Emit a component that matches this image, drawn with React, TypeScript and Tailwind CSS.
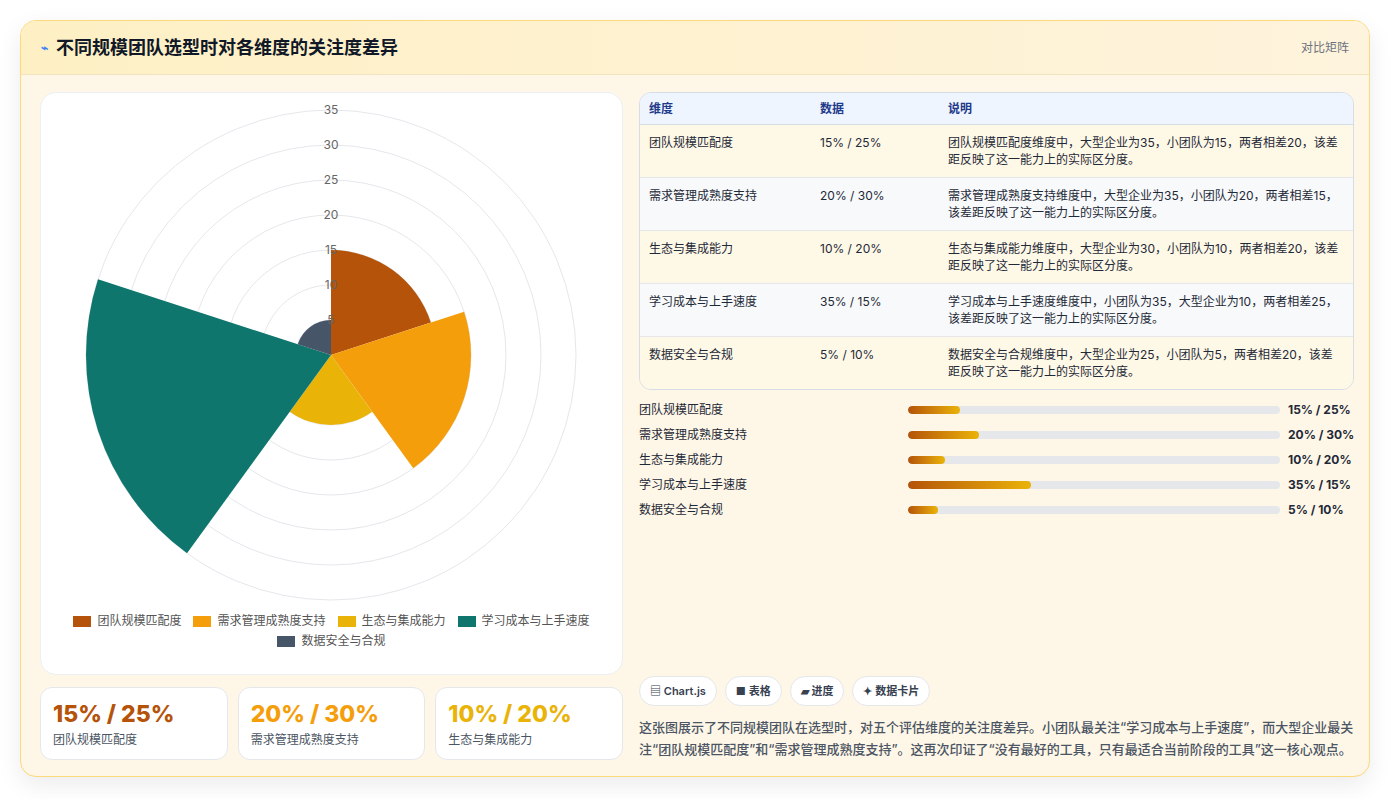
const rows = [
  { n: '团队规模匹配度', d: '15% / 25%', t: '团队规模匹配度维度中，大型企业为35，小团队为15，两者相差20，该差距反映了这一能力上的实际区分度。', w: 14 },
  { n: '需求管理成熟度支持', d: '20% / 30%', t: '需求管理成熟度支持维度中，大型企业为35，小团队为20，两者相差15，该差距反映了这一能力上的实际区分度。', w: 19 },
  { n: '生态与集成能力', d: '10% / 20%', t: '生态与集成能力维度中，大型企业为30，小团队为10，两者相差20，该差距反映了这一能力上的实际区分度。', w: 10 },
  { n: '学习成本与上手速度', d: '35% / 15%', t: '学习成本与上手速度维度中，小团队为35，大型企业为10，两者相差25，该差距反映了这一能力上的实际区分度。', w: 33 },
  { n: '数据安全与合规', d: '5% / 10%', t: '数据安全与合规维度中，大型企业为25，小团队为5，两者相差20，该差距反映了这一能力上的实际区分度。', w: 8 },
];

const slices = [
  { v: 15, c: '#b45309' },
  { v: 20, c: '#f59e0b' },
  { v: 10, c: '#eab308' },
  { v: 35, c: '#0f766e' },
  { v: 5, c: '#475569' },
];

function arc(cx: number, cy: number, r: number, a0: number, a1: number) {
  const p = (a: number) => [cx + r * Math.sin(a), cy - r * Math.cos(a)];
  const [x0, y0] = p(a0);
  const [x1, y1] = p(a1);
  return `M${cx},${cy} L${x0},${y0} A${r},${r} 0 0 1 ${x1},${y1} Z`;
}

function Polar() {
  const cx = 290, cy = 262, k = 7;
  return (
    <svg width="582" height="520" className="block">
      {[1, 2, 3, 4, 5, 6, 7].map((i) => (
        <circle key={i} cx={cx} cy={cy} r={i * 35} fill="none" stroke="#e5e7eb" strokeWidth="1" />
      ))}
      {slices.map((s, i) => (
        <path key={i} d={arc(cx, cy, s.v * k, (i * 2 * Math.PI) / 5, ((i + 1) * 2 * Math.PI) / 5)} fill={s.c} />
      ))}
      {[5, 10, 15, 20, 25, 30, 35].map((v) => (
        <text key={v} x={cx} y={cy - v * k + 4} textAnchor="middle" fontSize="12" fill="#666">{v}</text>
      ))}
    </svg>
  );
}

export default function App() {
  return (
    <div className="min-h-[799px] bg-white p-5" style={{ fontFamily: 'Inter, "Noto Sans CJK SC", sans-serif' }}>
      <div className="rounded-2xl border border-[#fcd97a] bg-[#fef7e8] shadow-[0_8px_24px_rgba(0,0,0,0.08)] overflow-hidden">
        <header className="flex items-center justify-between px-5 h-[54px] bg-gradient-to-r from-[#fef0c4] to-[#fef3dc] border-b border-[#f3e4c0]">
          <h1 className="text-lg font-bold text-[#111827] flex items-center gap-2"><span className="text-[#3b82f6] text-xs">⌁</span>不同规模团队选型时对各维度的关注度差异</h1>
          <span className="text-xs text-[#6b7280]">对比矩阵</span>
        </header>
        <div className="flex gap-4 px-[19px] pt-[17px] pb-4">
          <div className="w-[583px] flex flex-col gap-3">
            <div className="h-[583px] bg-white rounded-2xl border border-[#eceff3]">
              <Polar />
              <div className="flex flex-wrap justify-center gap-x-3 gap-y-1 px-8 text-xs text-[#555]">
                {rows.map((r, i) => (
                  <span key={i} className="flex items-center gap-1.5"><span className="w-[18px] h-[11px]" style={{ background: slices[i].c }} />{r.n}</span>
                ))}
              </div>
            </div>
            <div className="grid grid-cols-3 gap-[10px]">
              {rows.slice(0, 3).map((r, i) => (
                <div key={i} className="h-[73px] bg-white rounded-xl border border-[#e5e7eb] px-3 pt-3">
                  <div className="text-[23px] font-extrabold leading-7" style={{ color: slices[i].c }}>{r.d}</div>
                  <div className="text-xs text-[#4b5563] mt-1">{r.n}</div>
                </div>
              ))}
            </div>
          </div>
          <div className="flex-1 flex flex-col">
            <div className="rounded-xl border border-[#d6dde6] overflow-hidden text-xs">
              <div className="flex bg-[#eef5fe] h-8 items-center font-semibold text-[#1e3a8a] border-b border-[#d6dde6]">
                <div className="w-[180px] pl-[9px]">维度</div><div className="w-[128px]">数据</div><div>说明</div>
              </div>
              {rows.map((r, i) => (
                <div key={i} className={`flex py-[9px] text-[#1f2937] leading-[17px] ${i % 2 ? 'bg-[#f7f9fb]' : 'bg-[#fef8e7]'} ${i < 4 ? 'border-b border-[#e5e7eb]' : ''}`}>
                  <div className="w-[180px] pl-[9px]">{r.n}</div><div className="w-[128px]">{r.d}</div><div className="flex-1 pr-3">{r.t}</div>
                </div>
              ))}
            </div>
            <div className="mt-[11px] flex flex-col gap-[7px] text-xs text-[#1f2937]">
              {rows.map((r, i) => (
                <div key={i} className="flex items-center h-[18px]">
                  <div className="w-[269px] shrink-0">{r.n}</div>
                  <div className="w-[372px] shrink-0 h-2 bg-[#e5e7eb] rounded-full overflow-hidden">
                    <div className="h-full rounded-full bg-gradient-to-r from-[#b45309] to-[#eab308]" style={{ width: `${r.w}%` }} />
                  </div>
                  <div className="ml-2 font-bold whitespace-nowrap">{r.d}</div>
                </div>
              ))}
            </div>
            <div className="flex-1" />
            <div className="flex gap-2 text-[11px] font-semibold text-[#374151]">
              {['▤ Chart.js', '■ 表格', '▰ 进度', '✦ 数据卡片'].map((t) => (
                <span key={t} className="rounded-full bg-white border border-[#e5e7eb] px-[10px] py-[6px]">{t}</span>
              ))}
            </div>
            <p className="mt-[10px] text-[13px] leading-[22px] text-[#4b5563] font-medium">这张图展示了不同规模团队在选型时，对五个评估维度的关注度差异。小团队最关注“学习成本与上手速度”，而大型企业最关注“团队规模匹配度”和“需求管理成熟度支持”。这再次印证了“没有最好的工具，只有最适合当前阶段的工具”这一核心观点。</p>
          </div>
        </div>
      </div>
    </div>
  );
}
